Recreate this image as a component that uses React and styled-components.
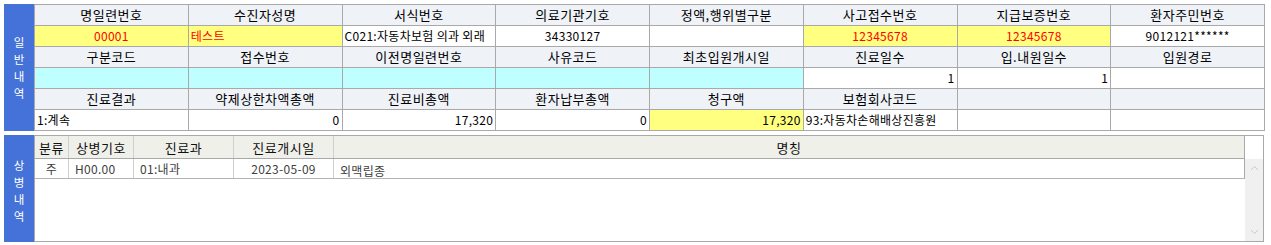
import React from "react";
import styled, { createGlobalStyle } from "styled-components";

const Global = createGlobalStyle`
  html, body { margin: 0; padding: 0; background: #ffffff; }
  body { font-family: "Noto Sans CJK KR", "Noto Sans", sans-serif; }
`;

const Page = styled.div`
  display: flex;
  flex-direction: column;
  gap: 4px;
  padding: 4px 6px 4px 4px;
  width: 1271px;
  box-sizing: border-box;
`;

const Section = styled.div`
  display: flex;
  height: ${(p) => p.$h}px;
`;

const SideLabel = styled.div`
  width: 30px;
  flex: none;
  background: #4472d8;
  color: #ffffff;
  display: flex;
  flex-direction: column;
  align-items: center;
  justify-content: center;
  font-size: 11.5px;
  line-height: 17px;
  padding-top: ${(p) => p.$shift || 0}px;
  box-sizing: border-box;
`;

const Grid = styled.div`
  flex: 1;
  display: grid;
  grid-template-columns: repeat(8, 1fr);
  grid-auto-rows: 20px;
  gap: 1px;
  background: #a9a9a9;
  border: 1px solid #a9a9a9;
`;

const bgMap = {
  head: "#eff3f8",
  yellow: "#ffff80",
  cyan: "#c0ffff",
  white: "#ffffff",
};

const Cell = styled.div`
  background: ${(p) => bgMap[p.$bg || "white"]};
  color: ${(p) => (p.$red ? "#ff0000" : "#000000")};
  font-size: ${(p) => (p.$bg === "head" ? 13 : 12)}px;
  display: flex;
  align-items: center;
  justify-content: ${(p) =>
    p.$align === "left" ? "flex-start" : p.$align === "right" ? "flex-end" : "center"};
  padding: 0 2px;
  white-space: nowrap;
  overflow: hidden;
  line-height: 20px;
  letter-spacing: ${(p) => (p.$bg === "head" ? 0.5 : 0.3)}px;
`;

const ListBox = styled.div`
  flex: 1;
  display: grid;
  grid-template-columns: 1fr 18px;
  grid-template-rows: 23px 1fr;
  border: 1px solid #a9a9a9;
  margin-right: 1px;
  background: #ffffff;
`;

const Table = styled.div`
  display: grid;
  grid-template-columns: 34px 65px 100px 100px 1fr;
  grid-auto-rows: ${(p) => p.$rowH}px;
  border-bottom: 1px solid ${(p) => p.$line};
  border-right: 1px solid #a9a9a9;
  background: ${(p) => p.$bg};
`;

const HeadCell = styled.div`
  font-size: 13px;
  color: #111111;
  display: flex;
  align-items: center;
  justify-content: center;
  border-right: 1px solid #cfcfcf;
  letter-spacing: 0.5px;
  &:last-child { border-right: none; }
`;

const DataCell = styled.div`
  font-size: 12px;
  color: #404040;
  display: flex;
  align-items: center;
  justify-content: ${(p) => (p.$align === "left" ? "flex-start" : "center")};
  padding-left: ${(p) => (p.$align === "left" ? 6 : 0)}px;
  padding-top: ${(p) => p.$down || 0}px;
  border-right: 1px solid #cfcfcf;
  white-space: nowrap;
  letter-spacing: 0.3px;
  &:last-child { border-right: none; }
`;

const Corner = styled.div`
  background: #ffffff;
`;

const Scrollbar = styled.div`
  background: #f0f0f0;
  display: flex;
  flex-direction: column;
  justify-content: space-between;
  align-items: center;
  padding: 6px 0 6px;
`;

const Body = styled.div`
  display: flex;
  flex-direction: column;
  min-width: 0;
`;

const Chevron = ({ up }) => (
  <svg width="9" height="6" viewBox="0 0 9 6">
    <path
      d={up ? "M1 5 L4.5 1.5 L8 5" : "M1 1 L4.5 4.5 L8 1"}
      fill="none"
      stroke="#c8c8c8"
      strokeWidth="1"
    />
  </svg>
);

const rows = [
  [
    { t: "명일련번호", bg: "head" },
    { t: "수진자성명", bg: "head" },
    { t: "서식번호", bg: "head" },
    { t: "의료기관기호", bg: "head" },
    { t: "정액,행위별구분", bg: "head" },
    { t: "사고접수번호", bg: "head" },
    { t: "지급보증번호", bg: "head" },
    { t: "환자주민번호", bg: "head" },
  ],
  [
    { t: "00001", bg: "yellow", red: true },
    { t: "테스트", bg: "yellow", red: true, align: "left" },
    { t: "C021:자동차보험 의과 외래", align: "left" },
    { t: "34330127" },
    { t: "" },
    { t: "12345678", bg: "yellow", red: true },
    { t: "12345678", bg: "yellow", red: true },
    { t: "9012121******" },
  ],
  [
    { t: "구분코드", bg: "head" },
    { t: "접수번호", bg: "head" },
    { t: "이전명일련번호", bg: "head" },
    { t: "사유코드", bg: "head" },
    { t: "최초입원개시일", bg: "head" },
    { t: "진료일수", bg: "head" },
    { t: "입.내원일수", bg: "head" },
    { t: "입원경로", bg: "head" },
  ],
  [
    { t: "", bg: "cyan" },
    { t: "", bg: "cyan" },
    { t: "", bg: "cyan" },
    { t: "", bg: "cyan" },
    { t: "", bg: "cyan" },
    { t: "1", align: "right" },
    { t: "1", align: "right" },
    { t: "" },
  ],
  [
    { t: "진료결과", bg: "head" },
    { t: "약제상한차액총액", bg: "head" },
    { t: "진료비총액", bg: "head" },
    { t: "환자납부총액", bg: "head" },
    { t: "청구액", bg: "head" },
    { t: "보험회사코드", bg: "head" },
    { t: "", bg: "head" },
    { t: "", bg: "head" },
  ],
  [
    { t: "1:계속", align: "left" },
    { t: "0", align: "right" },
    { t: "17,320", align: "right" },
    { t: "0", align: "right" },
    { t: "17,320", bg: "yellow", align: "right" },
    { t: "93:자동차손해배상진흥원", align: "left" },
    { t: "" },
    { t: "" },
  ],
];

const headers = ["분류", "상병기호", "진료과", "진료개시일", "명칭"];
const data = [
  { t: "주" },
  { t: "H00.00", align: "left" },
  { t: "01:내과", align: "left" },
  { t: "2023-05-09" },
  { t: "외맥립종", align: "left", down: 4 },
];

const Vertical = ({ text, shift }) => (
  <SideLabel $shift={shift}>
    {[...text].map((ch, i) => (
      <span key={i}>{ch}</span>
    ))}
  </SideLabel>
);

export default function App() {
  return (
    <>
      <Global />
      <Page>
        <Section $h={127}>
          <Vertical text="일반내역" />
          <Grid>
            {rows.flat().map((c, i) => (
              <Cell key={i} $bg={c.bg} $red={c.red} $align={c.align}>
                {c.t}
              </Cell>
            ))}
          </Grid>
        </Section>
        <Section $h={107}>
          <Vertical text="상병내역" shift={4} />
          <ListBox>
            <Table $rowH={22} $line="#a9a9a9" $bg="#f0f0eb">
              {headers.map((h) => (
                <HeadCell key={h}>{h}</HeadCell>
              ))}
            </Table>
            <Corner />
            <Body>
              <Table $rowH={19} $line="#b4b4b4" $bg="#ffffff">
                {data.map((d, i) => (
                  <DataCell key={i} $align={d.align} $down={d.down}>
                    {d.t}
                  </DataCell>
                ))}
              </Table>
            </Body>
            <Scrollbar>
              <Chevron up />
              <Chevron />
            </Scrollbar>
          </ListBox>
        </Section>
      </Page>
    </>
  );
}
